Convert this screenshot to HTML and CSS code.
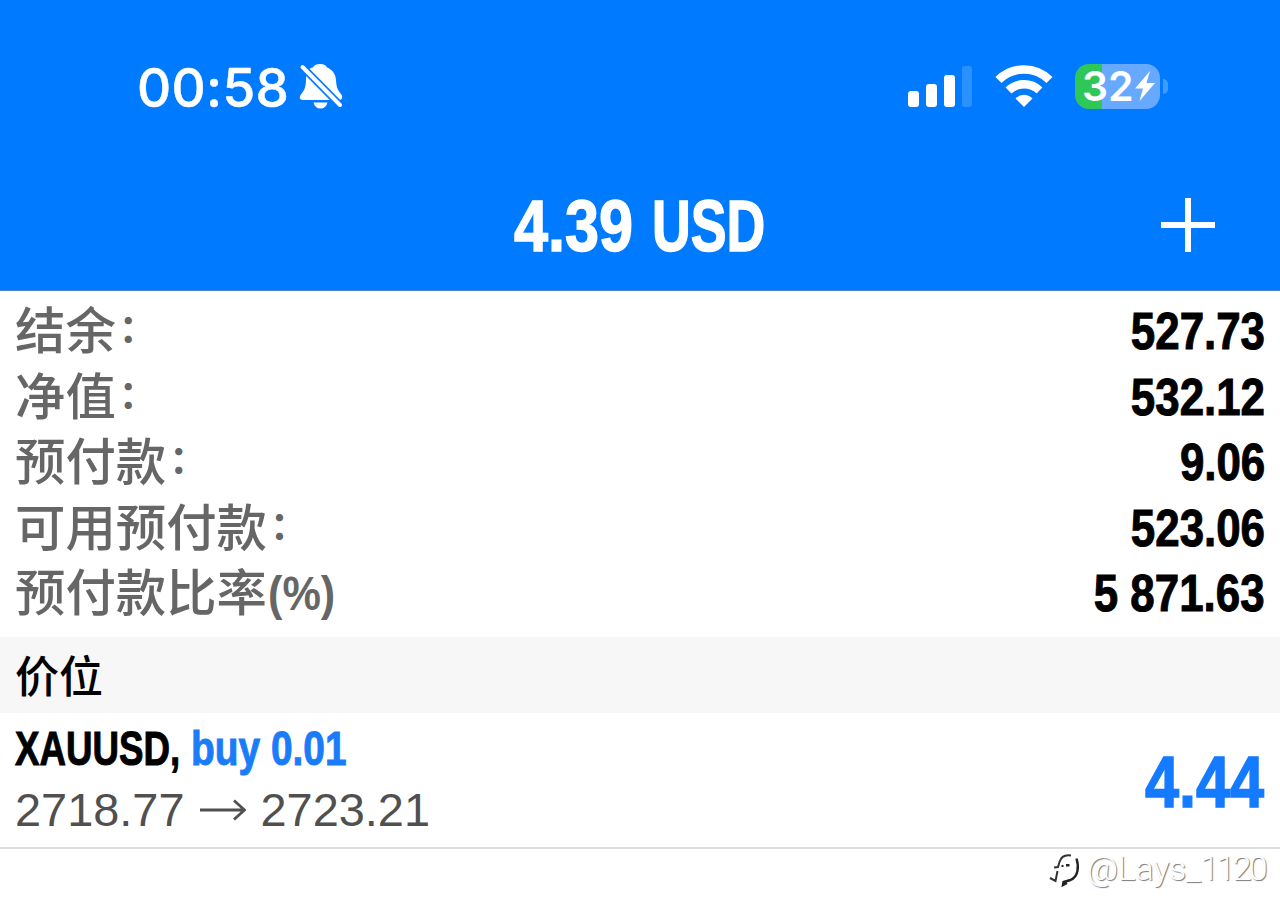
FILE: index.html
```html
<!DOCTYPE html>
<html lang="zh-CN">
<head>
    <meta charset="UTF-8">
    <meta name="viewport" content="width=device-width, initial-scale=1.0">
    <title>4.39 USD</title>
    <link rel="stylesheet" href="styles.css">
</head>
<body>
    <header class="header">
        <div class="status-bar">
            <div class="status-left">
                <span class="time">00:58</span>
                <svg class="bell" width="44" height="50" viewBox="0 0 44 50">
                    <path fill="#fff" d="M21 3c4 0 6 1.500 7 3.500 5 2 8.500 6 9 12.500.4 7 1.500 10 5 14 2 2.500 1.500 6-2 6H4c-3.500 0-4-3-2-5.500C5.500 29 7 26 7 17 7.500 10.500 10 7 14 6.500 15 4.500 17 3 21 3zM14.500 41.500h14c-1 4-3.500 6-7 6s-6-2-7-6z"/>
                    <path stroke="#007aff" stroke-width="7.500" d="M0 2.500l44 44.500"/>
                    <path stroke="#fff" stroke-width="4" stroke-linecap="round" d="M3.500 6l37.500 38"/>
                </svg>
            </div>
            <div class="status-right">
                <svg class="signal" width="64" height="44" viewBox="1 0 64 44">
                    <rect x="1" y="26" width="11" height="16" rx="3" fill="#fff"/>
                    <rect x="19" y="19" width="11" height="23" rx="3" fill="#fff"/>
                    <rect x="37" y="10" width="11" height="32" rx="3" fill="#fff"/>
                    <rect x="55" y="1" width="10" height="41" rx="3" fill="#2b91ff"/>
                </svg>
                <svg class="wifi" width="58" height="44" viewBox="0 0 58 44">
                    <path fill="none" stroke="#fff" stroke-width="8.500" d="M3.500 16a36 36 0 0 1 51 0"/>
                    <path fill="none" stroke="#fff" stroke-width="8.500" d="M13.500 26.500a22.500 22.500 0 0 1 31 0"/>
                    <path fill="#fff" d="M20.500 34.500Q29 27 37.500 34.500L29 43z"/>
                </svg>
                <div class="battery">
                    <span class="battery-text">32</span>
                    <svg class="bolt" width="20" height="32" viewBox="0 0 20 32">
                        <path fill="#fff" d="M15 1L0 18.500h8L4.500 31 20 13h-8.500z"/>
                    </svg>
                </div>
                <div class="battery-cap"></div>
            </div>
        </div>
        <div class="nav">
            <h1 class="title"><span class="amount">4.39</span> <span class="currency">USD</span></h1>
            <svg class="plus" width="54" height="54" viewBox="0 0 54 54">
                <path stroke="#fff" stroke-width="6" d="M0 27h54M27 0v54"/>
            </svg>
        </div>
    </header>

    <main>
        <div class="summary">
            <div class="row"><span class="label">结余<span class="colon">：</span></span><span class="value">527.73</span></div>
            <div class="row"><span class="label">净值<span class="colon">：</span></span><span class="value">532.12</span></div>
            <div class="row"><span class="label">预付款<span class="colon">：</span></span><span class="value">9.06</span></div>
            <div class="row"><span class="label">可用预付款<span class="colon">：</span></span><span class="value">523.06</span></div>
            <div class="row"><span class="label">预付款比率<span class="unit">(%)</span></span><span class="value">5 871.63</span></div>
        </div>

        <h2 class="section">价位</h2>

        <div class="position">
            <div class="position-info">
                <div class="symbol"><span class="ticker">XAUUSD,</span> <span class="side">buy 0.01</span></div>
                <div class="prices">
                    <span>2718.77</span>
                    <svg class="arrow" width="46" height="22" viewBox="0 0 46 22">
                        <path fill="none" stroke="#505050" stroke-width="2.800" d="M0 11h44M34 1.500l10.500 9.500L34 20.500"/>
                    </svg>
                    <span>2723.21</span>
                </div>
            </div>
            <div class="profit">4.44</div>
        </div>
    </main>

    <footer class="watermark">
        <svg width="36" height="40" viewBox="0 0 36 40">
            <path fill="none" stroke="#333" stroke-width="2" d="M8 19.500l4-.5 1.500-5C15 9 19 6.500 25 7.500M11.500 23L9.500 33l-5.500-3"/>
            <path fill="none" stroke="#222" stroke-width="2.400" d="M30.500 10.500c2.500 8 2 18-6 21.500l-7 2-.5 3 4-2"/>
            <path fill="#222" d="M15.500 17h2v2h-2zM20 16h3.500v2.500H20z"/>
        </svg>
        <span class="handle">@Lays_<span class="handle-number">1120</span></span>
    </footer>
</body>
</html>
```
FILE: styles.css
```css
* {
    box-sizing: border-box;
}
body {
    margin: 0;
    height: 922px;
    overflow: hidden;
    background-color: #fff;
    color: #000;
    font-family: "Liberation Sans", "Noto Sans CJK SC", sans-serif;
}
.header {
    height: 291px;
    background-color: #007aff;
    border-bottom: 1px solid #4a86d0;
    color: #fff;
}
.status-bar {
    display: flex;
    justify-content: space-between;
    height: 160px;
    padding: 62px 112px 0 137px;
}
.status-left,
.status-right {
    display: flex;
    align-items: center;
    height: 48px;
}
.time {
    width: 162px;
    padding-top: 3px;
    font-family: Inter, sans-serif;
    font-size: 53px;
    font-weight: 500;
    line-height: 48px;
    letter-spacing: 0.3px;
    -webkit-text-stroke: 0.5px #fff;
}
.signal {
    margin-top: 1px;
}
.wifi {
    margin: 0 22px 0 23px;
}
.battery {
    display: flex;
    align-items: center;
    width: 85px;
    height: 45px;
    padding-left: 7px;
    border-radius: 14px;
    background: linear-gradient(to right, #30c759 27px, #66a9ff 27px);
}
.battery-text {
    width: 53px;
    font-family: Inter, sans-serif;
    font-size: 41px;
    font-weight: 600;
}
.battery-cap {
    width: 5px;
    height: 15px;
    margin-left: 3px;
    border-radius: 0 5px 5px 0;
    background-color: #429cff;
}
.nav {
    display: grid;
    grid-template-columns: 1fr auto 1fr;
    align-items: center;
    height: 130px;
    padding: 0 65px;
}
.title {
    display: flex;
    grid-column: 2;
    width: 252px;
    justify-content: space-between;
    margin: 0;
    padding-top: 2px;
    font-size: 72px;
    line-height: 80px;
    white-space: nowrap;
    -webkit-text-stroke: 1.5px #fff;
}
.amount {
    width: 120px;
    transform: scaleX(0.85);
    transform-origin: left;
}
.currency {
    width: 114px;
    transform: scaleX(0.745);
    transform-origin: left;
}
.plus {
    justify-self: end;
}
.summary {
    height: 346px;
    padding: 8px 15px 0 15px;
}
.row {
    display: flex;
    justify-content: space-between;
    height: 65.600px;
    line-height: 65.600px;
}
.label {
    color: #666;
    font-size: 50.400px;
    font-weight: 500;
}
.colon {
    margin-left: 3px;
    font-size: 38px;
    font-weight: bold;
    line-height: 1;
    vertical-align: 7px;
}
.unit {
    display: inline-block;
    margin-left: 1px;
    font-size: 48px;
    line-height: 1;
    font-weight: bold;
    vertical-align: 1px;
    transform: scaleX(0.9);
    transform-origin: left;
}
.value {
    font-size: 51px;
    font-weight: bold;
    -webkit-text-stroke: 1px #000;
    transform: scaleX(0.86);
    transform-origin: right;
}
.section {
    height: 76px;
    margin: 0;
    padding-left: 15px;
    background-color: #f7f7f7;
    font-size: 44px;
    font-weight: 500;
    line-height: 81px;
}
.position {
    display: flex;
    justify-content: space-between;
    height: 136px;
    padding: 6px 16px 0 15px;
    border-bottom: 2px solid #dedede;
}
.symbol {
    display: flex;
    font-size: 48px;
    font-weight: bold;
    line-height: 60px;
    white-space: nowrap;
    -webkit-text-stroke: 1px;
}
.ticker {
    width: 176px;
    transform: scaleX(0.765);
    transform-origin: left;
}
.side {
    color: #1a7cf9;
    transform: scaleX(0.81);
    transform-origin: left;
}
.prices {
    display: flex;
    align-items: center;
    gap: 15px;
    height: 61px;
    color: #505050;
    font-size: 46.900px;
}
.profit {
    color: #147aff;
    font-size: 72px;
    font-weight: bold;
    line-height: 126px;
    -webkit-text-stroke: 1.5px #147aff;
    transform: scaleX(0.85);
    transform-origin: right;
}
.watermark {
    display: flex;
    justify-content: flex-end;
    align-items: center;
    gap: 5px;
    height: 38px;
    padding-right: 15px;
    color: #fff;
    font-family: Roboto, sans-serif;
    font-size: 34px;
    font-weight: 300;
}
.handle {
    letter-spacing: -0.300px;
    text-shadow: 1px 1px 1px #777;
}
.handle-number {
    letter-spacing: -2.700px;
}
```
